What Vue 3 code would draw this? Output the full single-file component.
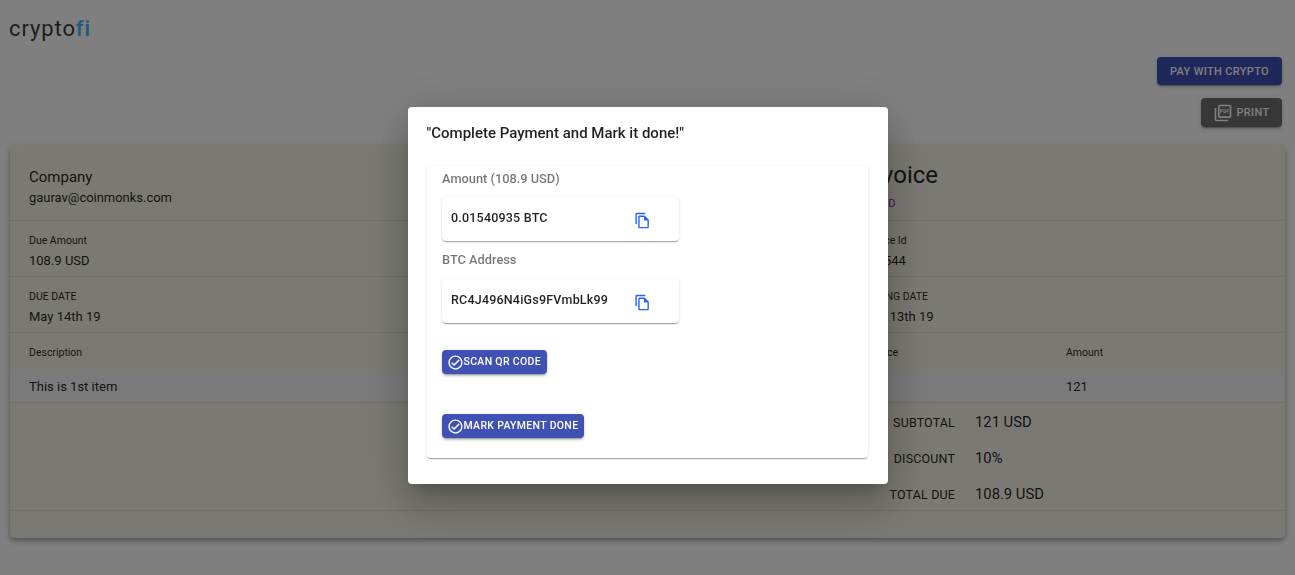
<script setup>
const totals = [
  { label: 'Subtotal', value: '121 USD' },
  { label: 'Discount', value: '10%' },
  { label: 'Total Due', value: '108.9 USD' },
]
const copyPath = 'M16 1H4c-1.1 0-2 .9-2 2v14h2V3h12V1zm-1 4H8c-1.1 0-1.99.9-1.99 2L6 21c0 1.1.89 2 1.99 2H19c1.1 0 2-.9 2-2V11l-6-6zM8 21V7h6v5h5v9H8z'
const checkPath = 'M12 2C6.48 2 2 6.48 2 12s4.48 10 10 10 10-4.48 10-10S17.52 2 12 2zm0 18c-4.41 0-8-3.59-8-8s3.59-8 8-8 8 3.59 8 8-3.59 8-8 8zm4.59-12.42L10 14.17l-2.59-2.58L6 13l4 4 8-8z'
</script>

<template>
  <div class="page">
    <header class="logo">crypto<span class="logo-fi">fi</span></header>

    <div class="actions">
      <button class="btn btn-pay">Pay with crypto</button>
      <button class="btn btn-print">
        <svg class="pdf-icon" viewBox="0 0 24 24" fill="currentColor">
          <path d="M20 2H8c-1.1 0-2 .9-2 2v12c0 1.1.9 2 2 2h12c1.1 0 2-.9 2-2V4c0-1.1-.9-2-2-2zm0 14H8V4h12v12zM4 6H2v14c0 1.1.9 2 2 2h14v-2H4V6z" />
          <text x="14" y="12" text-anchor="middle" font-size="5.5" font-weight="700" font-family="Roboto, sans-serif">PDF</text>
        </svg>
        Print
      </button>
    </div>

    <main class="invoice">
      <section class="row row-head">
        <div class="cell-left">
          <div class="company">Company</div>
          <div class="email">gaurav@coinmonks.com</div>
        </div>
        <div>
          <div class="title">Invoice</div>
          <div class="status">UNPAID</div>
        </div>
      </section>
      <section class="row row-meta">
        <div class="cell-left">
          <div class="meta-label">Due Amount</div>
          <div class="meta-value">108.9 USD</div>
        </div>
        <div>
          <div class="meta-label">Invoice Id</div>
          <div class="meta-value">154544</div>
        </div>
      </section>
      <section class="row row-meta">
        <div class="cell-left">
          <div class="meta-label">DUE DATE</div>
          <div class="meta-value">May 14th 19</div>
        </div>
        <div>
          <div class="meta-label">BILLING DATE</div>
          <div class="meta-value">May 13th 19</div>
        </div>
      </section>
      <section class="items items-head">
        <div class="cell-left">Description</div>
        <div>Unit Price</div>
        <div>Amount</div>
      </section>
      <section class="items items-row">
        <div class="cell-left">This is 1st item</div>
        <div>121</div>
        <div>121</div>
      </section>
      <section class="totals">
        <div v-for="t in totals" :key="t.label" class="total-row">
          <span class="total-label">{{ t.label }}</span>
          <span class="total-value">{{ t.value }}</span>
        </div>
      </section>
      <section class="invoice-foot"></section>
    </main>

    <div class="backdrop">
      <div class="dialog">
        <h2 class="dialog-title">"Complete Payment and Mark it done!"</h2>
        <div class="panel">
          <div class="field-label">Amount (108.9 USD)</div>
          <div class="copy-box">
            <span class="copy-text">0.01540935 BTC</span>
            <svg class="copy-icon" viewBox="0 0 24 24" fill="currentColor"><path :d="copyPath" /></svg>
          </div>
          <div class="field-label second">BTC Address</div>
          <div class="copy-box">
            <span class="copy-text">RC4J496N4iGs9FVmbLk99</span>
            <svg class="copy-icon" viewBox="0 0 24 24" fill="currentColor"><path :d="copyPath" /></svg>
          </div>
          <button class="small-btn scan">
            <svg viewBox="0 0 24 24" fill="currentColor"><path :d="checkPath" /></svg>
            <span class="small-btn-text">Scan QR code</span>
          </button>
          <button class="small-btn mark">
            <svg viewBox="0 0 24 24" fill="currentColor"><path :d="checkPath" /></svg>
            <span class="small-btn-text">Mark payment done</span>
          </button>
        </div>
      </div>
    </div>
  </div>
</template>

<style>
html, body { margin: 0; background: #fff; }
</style>

<style scoped>
.page {
  height: 575px;
  overflow: hidden;
  font-family: Roboto, "Liberation Sans", sans-serif;
  color: rgba(0, 0, 0, 0.87);
  background: #fff;
  box-sizing: border-box;
}
.logo {
  padding: 15px 0 0 9px;
  height: 42px;
  box-sizing: border-box;
  font-size: 22px;
  line-height: 27px;
  font-weight: 400;
  letter-spacing: 0.9px;
  color: #3d3d3d;
}
.logo-fi { color: #3ab4ff; font-weight: 500; }
.actions {
  display: flex;
  flex-direction: column;
  align-items: flex-end;
  gap: 13px;
  padding: 15px 13px 0 0;
}
.btn {
  border: 0;
  border-radius: 4px;
  font: 500 11px Roboto, sans-serif;
  letter-spacing: 0.33px;
  text-transform: uppercase;
  color: #fff;
  display: flex;
  align-items: center;
  justify-content: center;
  padding: 0;
  box-shadow: 0 3px 1px -2px rgba(0,0,0,.2), 0 2px 2px 0 rgba(0,0,0,.14), 0 1px 5px 0 rgba(0,0,0,.12);
}
.btn-pay { width: 125px; height: 28px; background: #3f51b5; }
.btn-print { width: 81px; height: 29px; background: #706e6e; gap: 3px; }
.pdf-icon { width: 20px; height: 20px; }
.invoice {
  margin: 19px 10px 0;
  height: 392px;
  background: #f5f3e6;
  border-radius: 4px;
  box-shadow: 0 2px 4px -1px rgba(0,0,0,.2), 0 4px 5px 0 rgba(0,0,0,.14), 0 1px 10px 0 rgba(0,0,0,.12);
  display: flex;
  flex-direction: column;
}
.row {
  display: grid;
  grid-template-columns: 852px 1fr;
  border-bottom: 1px solid #e0e0e0;
  box-sizing: border-box;
}
.cell-left { padding-left: 19px; }
.row-head { height: 75px; align-items: start; }
.company { font-size: 15px; line-height: 18px; margin-top: 22px; }
.email { font-size: 13px; line-height: 16px; margin-top: 4px; letter-spacing: -0.03px; }
.title { font-size: 24px; line-height: 30px; margin-top: 14px; }
.status { font-size: 11px; font-weight: 400; line-height: 14px; margin: 7px 0 0 -5px; color: #7b1fd0; }
.row-meta { height: 56px; }
.meta-label { font-size: 10.5px; line-height: 14px; margin-top: 13px; }
.meta-value { font-size: 13px; line-height: 16px; margin-top: 5px; }
.items {
  display: grid;
  grid-template-columns: 843px 213px 1fr;
  align-items: center;
  box-sizing: border-box;
}
.items-head { height: 38px; font-size: 10.5px; }
.items-row {
  height: 32px;
  font-size: 13px;
  background: #f5f5f5;
  border-bottom: 1px solid #e0e0e0;
}
.totals {
  height: 100px;
  padding-top: 7px;
  border-bottom: 1px solid #e0e0e0;
  display: flex;
  flex-direction: column;
  gap: 12px;
}
.total-row {
  display: grid;
  grid-template-columns: 945px 1fr;
  column-gap: 20px;
  height: 24px;
  align-items: center;
}
.total-label {
  text-align: right;
  font-size: 12.5px;
  text-transform: uppercase;
  letter-spacing: 0.15px;
}
.total-value { font-size: 14.8px; }
.invoice-foot { flex: 1; }

.backdrop {
  position: fixed;
  inset: 0;
  background: rgba(0, 0, 0, 0.5);
  display: flex;
  justify-content: center;
  align-items: flex-start;
}
.dialog {
  margin-top: 107px;
  width: 480px;
  height: 377px;
  box-sizing: border-box;
  padding: 0 20px 0 19px;
  background: #fff;
  border-radius: 4px;
  box-shadow: 0 11px 15px -7px rgba(0,0,0,.2), 0 24px 38px 3px rgba(0,0,0,.14), 0 9px 46px 8px rgba(0,0,0,.12);
}
.dialog-title {
  margin: 0;
  padding-top: 17px;
  font-size: 15px;
  line-height: 18px;
  font-weight: 500;
}
.panel {
  margin-top: 24px;
  height: 292px;
  box-sizing: border-box;
  padding: 0 15px;
  border-radius: 4px;
  box-shadow: 0 2px 1px -1px rgba(0,0,0,.2), 0 1px 1px 0 rgba(0,0,0,.14), 0 1px 3px 0 rgba(0,0,0,.12);
  display: flex;
  flex-direction: column;
  align-items: flex-start;
}
.field-label {
  font-size: 12.8px;
  font-weight: 500;
  line-height: 16px;
  color: rgba(0,0,0,.54);
  margin: 5px 0 0 0.5px;
  height: 26px;
}
.field-label.second { margin-top: 11px; height: 27px; }
.copy-box {
  width: 237px;
  height: 44px;
  box-sizing: border-box;
  padding: 0 28px 0 9.5px;
  display: flex;
  align-items: center;
  justify-content: space-between;
  border-radius: 4px;
  box-shadow: 0 2px 1px -1px rgba(0,0,0,.2), 0 1px 1px 0 rgba(0,0,0,.14), 0 1px 3px 0 rgba(0,0,0,.12);
}
.copy-text { font-size: 12.5px; font-weight: 500; margin-top: -3px; letter-spacing: 0.2px; }
.copy-icon { width: 17px; height: 17px; color: #2962ff; margin-top: 3px; }
.small-btn {
  border: 0;
  border-radius: 4px;
  background: #3f51b5;
  color: #fff;
  height: 24px;
  display: flex;
  align-items: center;
  gap: 0;
  padding: 0 0 0 5px;
  white-space: nowrap;
  font: 500 10.5px Roboto, sans-serif;
  letter-spacing: 0.32px;
  text-transform: uppercase;
  box-shadow: 0 3px 1px -2px rgba(0,0,0,.2), 0 2px 2px 0 rgba(0,0,0,.14), 0 1px 5px 0 rgba(0,0,0,.12);
}
.small-btn svg { width: 17px; height: 17px; flex: none; }
.small-btn-text { margin-top: -2px; }
.scan { margin-top: 27px; width: 105px; }
.mark { margin-top: 40px; width: 142px; }
</style>
